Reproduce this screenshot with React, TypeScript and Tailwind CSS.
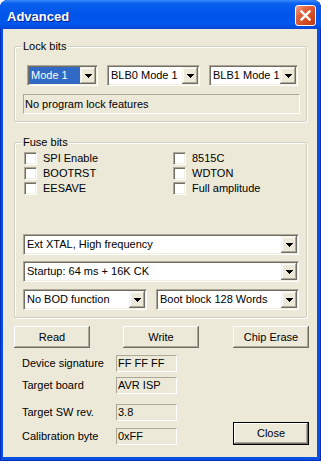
import type { ReactNode } from "react";

const sunken1 =
  "border border-t-[#aca899] border-l-[#aca899] border-b-white border-r-white";

function Arrow() {
  return (
    <svg width="7" height="4" viewBox="0 0 7 4" shapeRendering="crispEdges">
      <rect x="0" y="0" width="7" height="1" fill="#000" />
      <rect x="1" y="1" width="5" height="1" fill="#000" />
      <rect x="2" y="2" width="3" height="1" fill="#000" />
      <rect x="3" y="3" width="1" height="1" fill="#000" />
    </svg>
  );
}

function Combo({
  value,
  className,
  selected = false,
}: {
  value: string;
  className: string;
  selected?: boolean;
}) {
  return (
    <div
      className={`flex h-[21px] shrink-0 bg-white p-[1px] shadow-[inset_1px_1px_0_#716f64,inset_-1px_-1px_0_#f1efe2] ${sunken1} ${className}`}
    >
      <div
        className={`flex flex-1 items-center overflow-hidden whitespace-nowrap pl-[2px] ${
          selected ? "bg-[#316ac5] text-white" : ""
        }`}
      >
        {value}
      </div>
      <div className="flex w-[16px] items-center justify-center bg-[#ece9d8] shadow-[inset_-1px_-1px_0_#716f64,inset_1px_1px_0_#f1efe2,inset_-2px_-2px_0_#aca899,inset_2px_2px_0_#fff]">
        <Arrow />
      </div>
    </div>
  );
}

function Group({
  label,
  className,
  children,
}: {
  label: string;
  className: string;
  children: ReactNode;
}) {
  return (
    <div
      className={`relative w-[293px] rounded-[2px] border border-[#d0d0bf] shadow-[inset_1px_1px_0_#fff,1px_1px_0_#fff] ${className}`}
    >
      <span className="absolute -top-[7px] left-[7px] bg-[#ece9d8] px-[1px] leading-[13px]">
        {label}
      </span>
      {children}
    </div>
  );
}

function Check({ label }: { label: string }) {
  return (
    <div className="flex h-[13px] items-center">
      <div className="h-[13px] w-[13px] shrink-0 border border-t-[#aca899] border-l-[#aca899] border-b-white border-r-white bg-white shadow-[inset_1px_1px_0_#716f64,inset_-1px_-1px_0_#f1efe2]" />
      <span className="ml-[6px] leading-[13px]">{label}</span>
    </div>
  );
}

function Btn({
  children,
  className = "",
  isDefault = false,
}: {
  children: ReactNode;
  className?: string;
  isDefault?: boolean;
}) {
  return (
    <div
      className={`flex w-[76px] shrink-0 items-center justify-center bg-[#ece9d8] shadow-[inset_-1px_-1px_0_#716f64,inset_1px_1px_0_#fff,inset_-2px_-2px_0_#aca899] ${
        isDefault ? "border border-black" : ""
      } ${className}`}
    >
      {children}
    </div>
  );
}

function InfoRow({
  label,
  value,
  className,
}: {
  label: string;
  value: string;
  className: string;
}) {
  return (
    <div className={`flex items-center ${className}`}>
      <span className="w-[94px] leading-[13px]">{label}</span>
      <div
        className={`flex h-[17px] w-[61px] items-center pl-[1px] ${sunken1}`}
      >
        {value}
      </div>
    </div>
  );
}

export default function App() {
  return (
    <div className="h-[461px] w-[321px] bg-white font-['Liberation_Sans',Arial,sans-serif] text-[11px] text-black">
      <div className="flex h-full w-full flex-col overflow-hidden rounded-t-[8px] bg-[#0a50e0] shadow-[inset_1px_0_0_#0030c0,inset_-1px_0_0_#0030c0,inset_0_-1px_0_#0030c0]">
        {/* title bar */}
        <div className="flex h-[29px] shrink-0 items-center pl-[7px] pr-[5px] bg-[linear-gradient(180deg,#3a8cf7_0%,#0a60f0_12%,#0054e8_50%,#0058ee_82%,#0046d8_100%)]">
          <span className="mt-[3px] flex-1 text-[13px] font-bold leading-[15px] text-white [text-shadow:1px_1px_0_#0a1a8a]">
            Advanced
          </span>
          <div className="mt-[2px] flex h-[21px] w-[21px] items-center justify-center rounded-[3px] border border-white bg-[linear-gradient(135deg,#f0a080_0%,#e2603a_35%,#d44a20_70%,#b8381a_100%)]">
            <svg width="13" height="13" viewBox="0 0 13 13">
              <path
                d="M2.5 2.5l8 8M10.5 2.5l-8 8"
                stroke="#fff"
                strokeWidth="2.4"
                strokeLinecap="square"
              />
            </svg>
          </div>
        </div>

        {/* client area */}
        <div className="mb-[4px] ml-[3px] mr-[4px] flex flex-1 flex-col bg-[#ece9d8] pl-[11px] pt-[17px]">
          <Group label="Lock bits" className="h-[76px]">
            <div className="flex gap-[9px] pl-[12px] pt-[18px]">
              <Combo className="w-[71px]" value="Mode 1" selected />
              <Combo className="w-[93px]" value="BLB0 Mode 1" />
              <Combo className="w-[89px]" value="BLB1 Mode 1" />
            </div>
            <div
              className={`ml-[8px] mt-[8px] flex h-[20px] w-[277px] items-center pl-[1px] ${sunken1}`}
            >
              No program lock features
            </div>
          </Group>

          <Group label="Fuse bits" className="mt-[20px] h-[176px]">
            <div className="grid grid-cols-[149px_1fr] gap-y-[2px] pl-[9px] pt-[9px]">
              <Check label="SPI Enable" />
              <Check label="8515C" />
              <Check label="BOOTRST" />
              <Check label="WDTON" />
              <Check label="EESAVE" />
              <Check label="Full amplitude" />
            </div>
            <div className="flex flex-col pl-[8px]">
              <Combo className="mt-[39px] w-[276px]" value="Ext XTAL, High frequency" />
              <Combo className="mt-[6px] w-[276px]" value="Startup: 64 ms + 16K CK" />
              <div className="mt-[7px] flex gap-[9px]">
                <Combo className="w-[124px]" value="No BOD function" />
                <Combo className="w-[143px]" value="Boot block 128 Words" />
              </div>
            </div>
          </Group>

          <div className="mt-[8px] flex">
            <Btn className="h-[22px]">Read</Btn>
            <Btn className="ml-[33px] h-[22px]">Write</Btn>
            <Btn className="ml-[34px] h-[22px]">Chip Erase</Btn>
          </div>

          <div className="flex">
            <div className="flex w-[219px] flex-col pl-[8px]">
              <InfoRow label="Device signature" value="FF FF FF" className="mt-[7px]" />
              <InfoRow label="Target board" value="AVR ISP" className="mt-[5px]" />
              <InfoRow label="Target SW rev." value="3.8" className="mt-[10px]" />
              <InfoRow label="Calibration byte" value="0xFF" className="mt-[7px]" />
            </div>
            <Btn isDefault className="mt-[74px] h-[23px]">
              Close
            </Btn>
          </div>
        </div>
      </div>
    </div>
  );
}
